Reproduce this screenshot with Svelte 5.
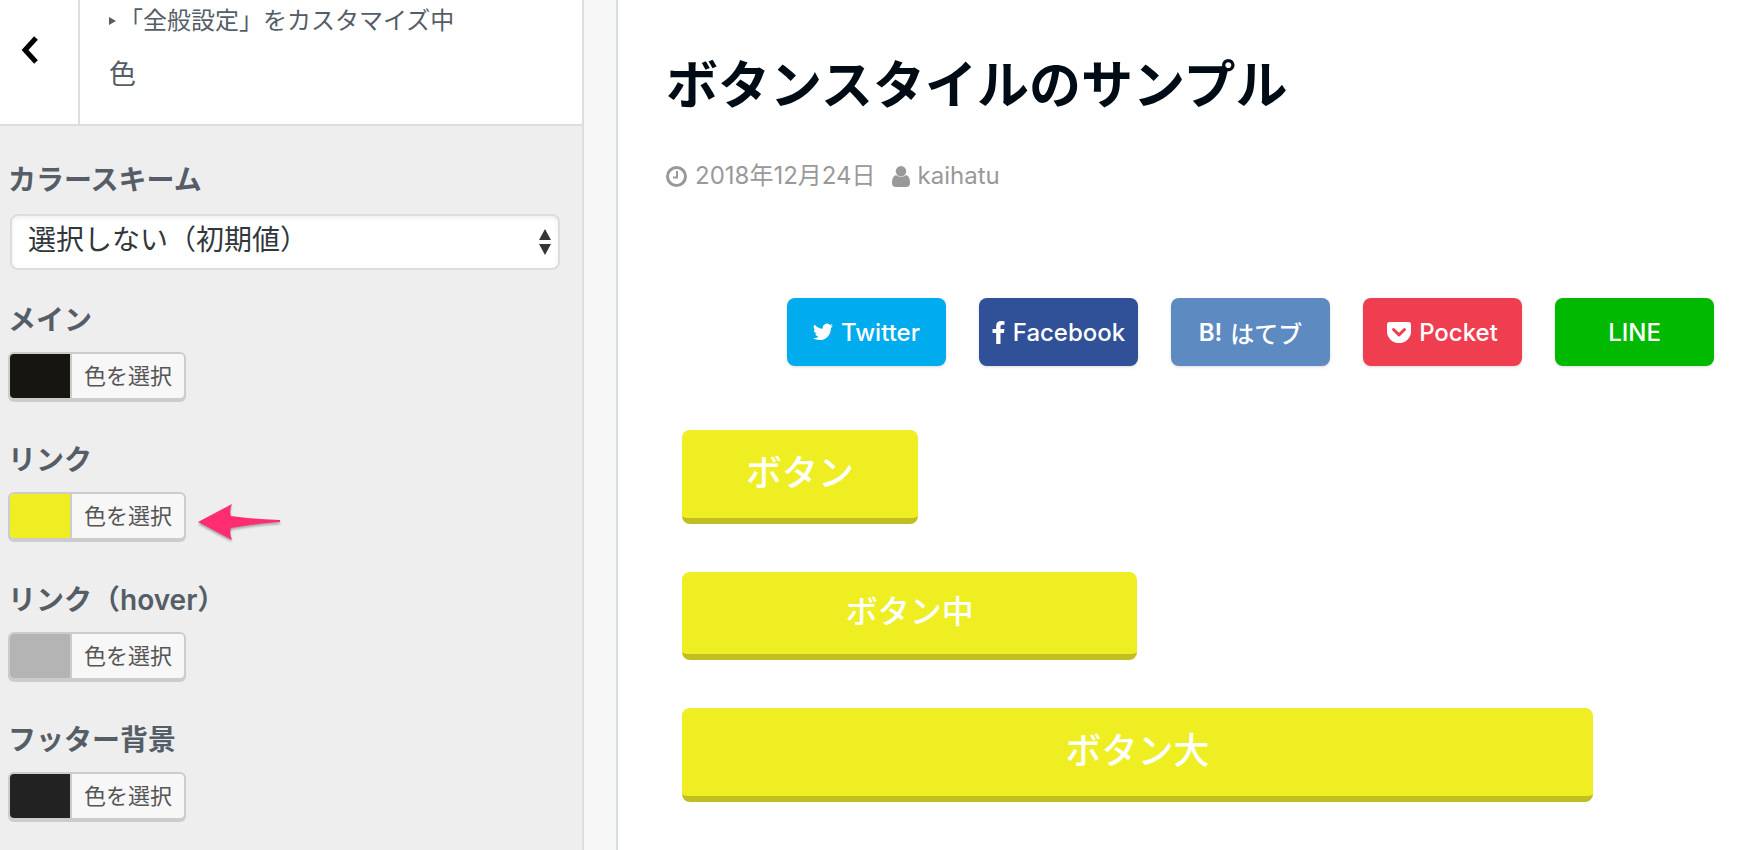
<script>
    let scheme = "none";

    let colors = [
        { id: "main", label: "メイン", value: "#16150f" },
        { id: "link", label: "リンク", value: "#eeee22", marked: true },
        { id: "link-hover", label: "リンク（hover）", value: "#b4b4b4" },
        { id: "footer-bg", label: "フッター背景", value: "#222222" }
    ];

    let shares = [
        { name: "Twitter", icon: "twitter", color: "#00acee" },
        { name: "Facebook", icon: "facebook", color: "#305097" },
        { name: "はてブ", icon: "hatena", color: "#5d8ac1" },
        { name: "Pocket", icon: "pocket", color: "#ef3e4f" },
        { name: "LINE", icon: null, color: "#00b900" }
    ];

    let samples = [
        { text: "ボタン", size: "normal" },
        { text: "ボタン中", size: "medium" },
        { text: "ボタン大", size: "large" }
    ];
</script>

<div class="customizer">
    <aside class="sidebar">
        <header class="section-title">
            <button class="back" aria-label="戻る">
                <svg width="18" height="28" viewBox="0 0 18 28"><path d="M15 2 L4 14 L15 26" fill="none" stroke="#000" stroke-width="5"/></svg>
            </button>
            <div class="titles">
                <span class="crumb"><svg width="8" height="8" viewBox="0 0 8 8"><path d="M0 0 L7 4 L0 8 Z" fill="#555d66"/></svg>「全般設定」をカスタマイズ中</span>
                <h3>色</h3>
            </div>
        </header>
        <div class="controls">
            <div class="control">
                <label for="scheme">カラースキーム</label>
                <div class="select-wrap">
                    <select id="scheme" bind:value={scheme}>
                        <option value="none">選択しない（初期値）</option>
                    </select>
                    <svg class="arrows" width="14" height="26" viewBox="0 0 14 26"><path d="M7 0 L13 11 H1 Z M1 15 H13 L7 26 Z" fill="#32373c"/></svg>
                </div>
            </div>
            {#each colors as color}
            <div class="control">
                <label for={color.id}>{color.label}</label>
                <div class="picker-row">
                    <button class="picker" id={color.id}>
                        <span class="swatch" style="background-color: {color.value}"></span>
                        <span class="picker-text">色を選択</span>
                    </button>
                    {#if color.marked}
                    <svg class="pointer" width="84" height="40" viewBox="0 0 84 40"><path d="M1 20 L35 2 Q32 9 34 14 Q56 17 83 18 V20 Q56 22 34 26 Q32 31 35 38 Z" fill="#ff2d6f"/></svg>
                    {/if}
                </div>
            </div>
            {/each}
        </div>
    </aside>
    <main class="preview">
        <h1>ボタンスタイルのサンプル</h1>
        <div class="meta">
            <svg width="21" height="21" viewBox="0 0 21 21"><circle cx="10.5" cy="10.5" r="9" fill="none" stroke="#999" stroke-width="3"/><path d="M11 5 V11.5 H7" fill="none" stroke="#999" stroke-width="2"/></svg>
            <span class="date">2018年12月24日</span>
            <svg width="18" height="21" viewBox="0 0 18 21"><circle cx="9" cy="5.2" r="5.2" fill="#999"/><path d="M4 9 Q9 13 14 9 Q18 10 18 17 Q18 21 14 21 H4 Q0 21 0 17 Q0 10 4 9 Z" fill="#999"/></svg>
            <span>kaihatu</span>
        </div>
        <div class="shares">
            {#each shares as share}
            <a href="#share" style="background-color: {share.color}">
                {#if share.icon == "twitter"}
                <svg width="20" height="18" viewBox="0 0 24 20"><path d="M24 2.4a10 10 0 0 1-2.8.8A5 5 0 0 0 23.300.5a10 10 0 0 1-3.100 1.200A4.900 4.900 0 0 0 11.800 6.200 14 14 0 0 1 1.700 1a4.900 4.900 0 0 0 1.500 6.600A5 5 0 0 1 1 7v.1a4.900 4.900 0 0 0 3.900 4.800 5 5 0 0 1-2.200.1 4.900 4.900 0 0 0 4.600 3.400A10 10 0 0 1 0 17.500 14 14 0 0 0 7.500 19.700c9.100 0 14.300-7.700 14-14.600A10 10 0 0 0 24 2.400z" fill="#fff"/></svg>
                {:else if share.icon == "facebook"}
                <svg width="13" height="23" viewBox="0 0 13 23"><path d="M12.500.2V3.800H10.300Q8.500 3.800 8.500 5.500V8H12.400L11.900 12H8.500V23H4.200V12H.5V8H4.200V4.800Q4.200 0 9.300 0Z" fill="#fff"/></svg>
                {:else if share.icon == "hatena"}
                <b>B!</b>
                {:else if share.icon == "pocket"}
                <svg width="24" height="21" viewBox="0 0 24 21"><path d="M2.500 0H21.500Q24 0 24 2.500V9.500A12 11.500 0 0 1 0 9.500V2.500Q0 0 2.500 0Z" fill="#fff"/><path d="M6.500 7.500 L12 12.800 L17.500 7.500" fill="none" stroke="#ef3e4f" stroke-width="3" stroke-linecap="round" stroke-linejoin="round"/></svg>
                {/if}
                <span>{share.name}</span>
            </a>
            {/each}
        </div>
        <div class="samples">
            {#each samples as sample}
            <a class="sample {sample.size}" href="#sample">{sample.text}</a>
            {/each}
        </div>
    </main>
</div>

<style>
    :global(body){
        margin: 0;
        background-color: white;
    }
    .customizer{
        display: flex;
        min-height: 100vh;
        background-color: #f7f7f7;
        font-family: Inter, "Noto Sans CJK JP", sans-serif;
    }
    .sidebar{
        box-sizing: border-box;
        width: 584px;
        flex-shrink: 0;
        border-right: 2px solid #ddd;
        background-color: #eee;
        color: #555d66;
    }
    .section-title{
        display: flex;
        height: 124px;
        border-bottom: 2px solid #ddd;
        background-color: white;
    }
    .back{
        width: 80px;
        padding: 0 0 24px 21px;
        border: none;
        border-right: 2px solid #ddd;
        background: none;
        text-align: left;
    }
    .back svg{
        display: block;
    }
    .titles{
        padding: 1px 0 0 29px;
    }
    .crumb{
        display: flex;
        align-items: center;
        gap: 2px;
        font-size: 24px;
        line-height: 40px;
    }
    h3{
        margin: 0;
        padding-top: 14px;
        font-size: 27px;
        line-height: 40px;
        font-weight: 400;
    }
    .controls{
        padding: 34px 22px 0 8px;
    }
    .control{
        height: 140px;
    }
    .control label{
        display: block;
        height: 52px;
        font-size: 28px;
        line-height: 40px;
        font-weight: 600;
    }
    .select-wrap{
        position: relative;
        padding: 2px 0 0 2px;
    }
    select{
        appearance: none;
        box-sizing: border-box;
        width: 100%;
        height: 56px;
        padding: 0 40px 4px 16px;
        border: 2px solid #ddd;
        border-radius: 8px;
        background-color: white;
        box-shadow: inset 0 2px 4px rgba(0,0,0,0.07);
        color: #32373c;
        font-family: inherit;
        font-size: 28px;
    }
    .arrows{
        position: absolute;
        right: 8px;
        top: 17px;
        pointer-events: none;
    }
    .picker-row{
        display: flex;
        gap: 11px;
    }
    .picker{
        display: flex;
        height: 48px;
        padding: 0;
        overflow: hidden;
        border: 2px solid #ccc;
        border-radius: 6px;
        background-color: #f7f7f7;
        box-shadow: 0 2px 0 #ccc;
        color: #555;
        font-family: inherit;
        font-size: 22px;
    }
    .swatch{
        width: 60px;
        height: 100%;
    }
    .picker-text{
        padding: 0 12px;
        border-left: 2px solid #ccc;
        line-height: 44px;
    }
    .pointer{
        margin-top: 10px;
        filter: drop-shadow(0 2px 1px rgba(0,0,0,0.3));
    }
    .preview{
        flex: 1;
        margin-left: 32px;
        padding: 52px 33px 0 48px;
        border-left: 2px solid #d5dde5;
        background-color: white;
    }
    h1{
        margin: 0;
        color: #000c15;
        font-size: 52px;
        line-height: 68px;
        font-weight: 700;
    }
    .meta{
        display: flex;
        align-items: center;
        gap: 8px;
        margin-top: 36px;
        color: #999;
        font-size: 24px;
        line-height: 40px;
    }
    .date{
        margin-right: 8px;
    }
    .shares{
        display: flex;
        justify-content: flex-end;
        gap: 33px;
        margin: 102px 3px 0 0;
    }
    .shares a{
        display: flex;
        align-items: center;
        justify-content: center;
        gap: 8px;
        width: 159px;
        height: 68px;
        border-radius: 8px;
        box-shadow: 0 1px 3px rgba(0,0,0,0.15);
        color: white;
        font-size: 24px;
        font-weight: 500;
        text-decoration: none;
    }
    .shares b{
        font-weight: 600;
    }
    .samples{
        display: flex;
        flex-direction: column;
        align-items: flex-start;
        gap: 48px;
        padding: 64px 0 0 16px;
    }
    .sample{
        box-sizing: border-box;
        padding: 1px 64px 3px;
        border-bottom: 6px solid #c0be20;
        border-radius: 8px;
        background-color: #eeee22;
        color: white;
        font-size: 36px;
        line-height: 84px;
        font-weight: 500;
        text-align: center;
        text-decoration: none;
    }
    .medium{
        width: 44%;
        font-size: 32px;
        line-height: 78px;
    }
    .large{
        width: 88%;
    }
</style>
